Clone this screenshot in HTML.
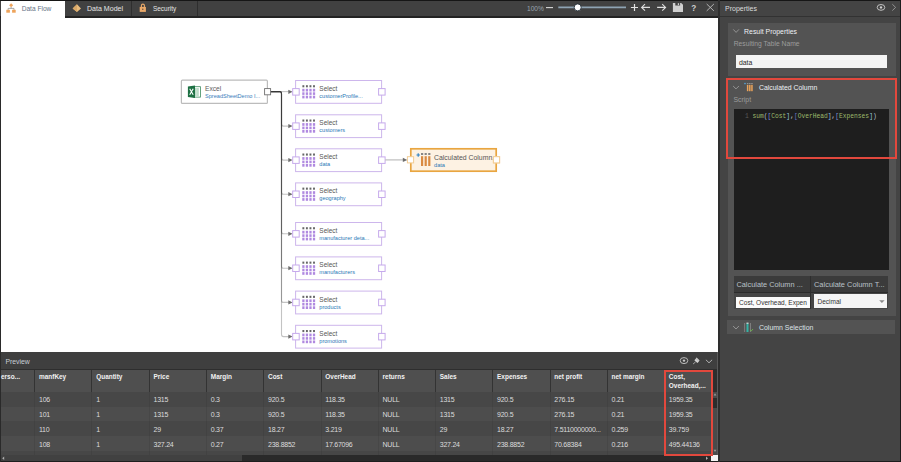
<!DOCTYPE html><html><head><meta charset="utf-8"><style>
*{margin:0;padding:0;box-sizing:border-box}
html,body{width:901px;height:462px;overflow:hidden;background:#2e2e2e;font-family:"Liberation Sans",sans-serif}
.a{position:absolute}
.t{position:absolute;white-space:nowrap;line-height:10px}
.m{font-family:"Liberation Mono",monospace}
svg{position:absolute;left:0;top:0}
</style></head><body>
<div class="a" style="left:0px;top:0px;width:718px;height:18px;background:#414141;border-top:1px solid #161616;border-bottom:2px solid #232323"></div>
<div class="a" style="left:1px;top:1px;width:64px;height:18px;background:#fff"></div>
<div class="a" style="left:131px;top:1px;width:1px;height:15px;background:#2e2e2e"></div>
<div class="a" style="left:197px;top:1px;width:1px;height:15px;background:#2e2e2e"></div>
<div class="t" style="left:21.7px;top:4px;font-size:6.6px;color:#667385">Data Flow</div>
<div class="t" style="left:87px;top:4px;font-size:7.05px;color:#e6e6e6">Data Model</div>
<div class="t" style="left:153px;top:4px;font-size:6.45px;color:#e6e6e6">Security</div>
<div class="t" style="left:527px;top:4px;font-size:6.6px;color:#9aa5ae">100%</div>
<div class="a" style="left:0px;top:18px;width:718px;height:334px;background:#fff;border-left:1px solid #2a2a2a"></div>
<div class="a" style="left:718px;top:0px;width:2px;height:462px;background:#2e2e2e"></div>
<div class="a" style="left:720px;top:0px;width:181px;height:462px;background:#444;border-top:1px solid #161616"></div>
<div class="a" style="left:720px;top:16px;width:181px;height:1px;background:#323232"></div>
<div class="a" style="left:900px;top:0px;width:1px;height:462px;background:#1e1e1e"></div>
<div class="a" style="left:720px;top:461px;width:181px;height:1px;background:#1c1c1c"></div>
<div class="t" style="left:725px;top:4px;font-size:7px;color:#dcdcdc">Properties</div>
<div class="a" style="left:727.5px;top:23.4px;width:168px;height:52.6px;background:#535353"></div>
<div class="t" style="left:744.1px;top:27px;font-size:6.9px;color:#eef1f4">Result Properties</div>
<div class="t" style="left:733.7px;top:39px;font-size:6.75px;color:#9c9c9c">Resulting Table Name</div>
<div class="a" style="left:736px;top:54.6px;width:151px;height:13.6px;background:#f4f4f4"></div>
<div class="t" style="left:738.9px;top:58px;font-size:6.9px;color:#2a2a2a">data</div>
<div class="a" style="left:727.5px;top:79px;width:168px;height:237.4px;background:#535353"></div>
<div class="t" style="left:759px;top:83px;font-size:6.9px;color:#eef1f4">Calculated Column</div>
<div class="t" style="left:733.5px;top:95px;font-size:6.9px;color:#9c9c9c">Script</div>
<div class="a" style="left:733.8px;top:109px;width:155.4px;height:160.5px;background:#1e1e1e"></div>
<div class="t m" style="left:745.1px;top:112px;font-size:6.28px;color:#5a5a5a">1</div>
<div class="t m" style="left:752.5px;top:112px;font-size:6.28px;"><span style="color:#9dbb6c">sum</span><span style="color:#b8c4d0">(</span><span style="color:#7b8fd8">[</span><span style="color:#9dbb6c">Cost</span><span style="color:#9cc8e0">]</span><span style="color:#d0d0d0">,</span><span style="color:#6a6fd0">[</span><span style="color:#9dbb6c">OverHead</span><span style="color:#9cc8e0">]</span><span style="color:#d0d0d0">,</span><span style="color:#7b8fd8">[</span><span style="color:#9dbb6c">Expenses</span><span style="color:#9cc8e0">]</span><span style="color:#b8c4d0">)</span></div>
<div class="a" style="left:733.8px;top:276.2px;width:154.7px;height:33px;background:#464646"></div>
<div class="a" style="left:733.8px;top:276.2px;width:154.7px;height:17px;background:#3b3b3b;border-bottom:1px solid #2c2c2c"></div>
<div class="a" style="left:810.2px;top:276.2px;width:0.9px;height:33px;background:#2e2e2e"></div>
<div class="t" style="left:736.4px;top:280px;font-size:7.38px;color:#b9c1c8">Calculate Column ...</div>
<div class="t" style="left:814px;top:280px;font-size:7.45px;color:#b9c1c8">Calculate Column T...</div>
<div class="a" style="left:736px;top:296.9px;width:74.2px;height:10.8px;background:#fbfbfb"></div>
<div class="t" style="left:739.1px;top:298px;font-size:6.53px;color:#333">Cost, Overhead, Expen</div>
<div class="a" style="left:814px;top:294px;width:73px;height:14px;background:#f5f5f5"></div>
<div class="t" style="left:817.5px;top:297px;font-size:6.5px;color:#333">Decimal</div>
<div class="a" style="left:727.3px;top:319.8px;width:168.2px;height:14.4px;background:#535353"></div>
<div class="t" style="left:759px;top:323px;font-size:6.94px;color:#dde2e6">Column Selection</div>
<div class="a" style="left:725.8px;top:77.8px;width:171.5px;height:80.8px;border:2px solid #e2483d"></div>
<div class="a" style="left:0px;top:352px;width:717px;height:17px;background:#3f3f3f;border-left:1px solid #2a2a2a"></div>
<div class="a" style="left:1px;top:369px;width:716px;height:1.2px;background:#2e2e2e"></div>
<div class="a" style="left:717px;top:352px;width:1px;height:110px;background:#5a5a5a"></div>
<div class="t" style="left:5.4px;top:357px;font-size:6.83px;color:#c8ced6">Preview</div>
<div class="a" style="left:1px;top:370px;width:712px;height:22px;background:#4f4f4f"></div>
<div class="a" style="left:1px;top:392px;width:712px;height:63px;background:#474747"></div>
<div class="a" style="left:1px;top:406.5px;width:712px;height:14.5px;background:#4d4d4d"></div>
<div class="a" style="left:1px;top:436px;width:712px;height:14.7px;background:#4d4d4d"></div>
<div class="a" style="left:1px;top:455px;width:716px;height:6px;background:#2a2a2a"></div>
<div class="a" style="left:1px;top:455px;width:241px;height:6px;background:#414141"></div>
<div class="a" style="left:0px;top:461px;width:718px;height:1px;background:#1e1e1e"></div>
<div class="a" style="left:713.3px;top:392px;width:3.4px;height:63px;background:#4a4a4a"></div>
<div class="a" style="left:713.3px;top:397.5px;width:3.4px;height:10px;background:#2c2c2c"></div>
<div class="a" style="left:711px;top:455px;width:7px;height:6px;background:#f4f4f4"></div>
<div class="a" style="left:0px;top:352px;width:1px;height:110px;background:#2a2a2a"></div>
<div class="a" style="left:34.2px;top:370px;width:1px;height:22px;background:#333"></div>
<div class="a" style="left:34.2px;top:392px;width:1px;height:63px;background:rgba(0,0,0,0.07)"></div>
<div class="a" style="left:91.46px;top:370px;width:1px;height:22px;background:#333"></div>
<div class="a" style="left:91.46px;top:392px;width:1px;height:63px;background:rgba(0,0,0,0.07)"></div>
<div class="a" style="left:148.72px;top:370px;width:1px;height:22px;background:#333"></div>
<div class="a" style="left:148.72px;top:392px;width:1px;height:63px;background:rgba(0,0,0,0.07)"></div>
<div class="a" style="left:205.98px;top:370px;width:1px;height:22px;background:#333"></div>
<div class="a" style="left:205.98px;top:392px;width:1px;height:63px;background:rgba(0,0,0,0.07)"></div>
<div class="a" style="left:263.24px;top:370px;width:1px;height:22px;background:#333"></div>
<div class="a" style="left:263.24px;top:392px;width:1px;height:63px;background:rgba(0,0,0,0.07)"></div>
<div class="a" style="left:320.5px;top:370px;width:1px;height:22px;background:#333"></div>
<div class="a" style="left:320.5px;top:392px;width:1px;height:63px;background:rgba(0,0,0,0.07)"></div>
<div class="a" style="left:377.76px;top:370px;width:1px;height:22px;background:#333"></div>
<div class="a" style="left:377.76px;top:392px;width:1px;height:63px;background:rgba(0,0,0,0.07)"></div>
<div class="a" style="left:435.02px;top:370px;width:1px;height:22px;background:#333"></div>
<div class="a" style="left:435.02px;top:392px;width:1px;height:63px;background:rgba(0,0,0,0.07)"></div>
<div class="a" style="left:492.28px;top:370px;width:1px;height:22px;background:#333"></div>
<div class="a" style="left:492.28px;top:392px;width:1px;height:63px;background:rgba(0,0,0,0.07)"></div>
<div class="a" style="left:549.54px;top:370px;width:1px;height:22px;background:#333"></div>
<div class="a" style="left:549.54px;top:392px;width:1px;height:63px;background:rgba(0,0,0,0.07)"></div>
<div class="a" style="left:606.8px;top:370px;width:1px;height:22px;background:#333"></div>
<div class="a" style="left:606.8px;top:392px;width:1px;height:63px;background:rgba(0,0,0,0.07)"></div>
<div class="a" style="left:664.06px;top:370px;width:1px;height:22px;background:#333"></div>
<div class="a" style="left:664.06px;top:392px;width:1px;height:63px;background:rgba(0,0,0,0.07)"></div>
<div class="t" style="left:1px;top:372px;font-size:6.45px;color:#f2f2f2;font-weight:bold">erso...</div>
<div class="t" style="left:39.0px;top:372px;font-size:6.45px;color:#f2f2f2;font-weight:bold">manfKey</div>
<div class="t" style="left:96.26px;top:372px;font-size:6.45px;color:#f2f2f2;font-weight:bold">Quantity</div>
<div class="t" style="left:153.52px;top:372px;font-size:6.45px;color:#f2f2f2;font-weight:bold">Price</div>
<div class="t" style="left:210.78px;top:372px;font-size:6.45px;color:#f2f2f2;font-weight:bold">Margin</div>
<div class="t" style="left:268.04px;top:372px;font-size:6.45px;color:#f2f2f2;font-weight:bold">Cost</div>
<div class="t" style="left:325.3px;top:372px;font-size:6.45px;color:#f2f2f2;font-weight:bold">OverHead</div>
<div class="t" style="left:382.56px;top:372px;font-size:6.45px;color:#f2f2f2;font-weight:bold">returns</div>
<div class="t" style="left:439.82px;top:372px;font-size:6.45px;color:#f2f2f2;font-weight:bold">Sales</div>
<div class="t" style="left:497.08px;top:372px;font-size:6.45px;color:#f2f2f2;font-weight:bold">Expenses</div>
<div class="t" style="left:554.34px;top:372px;font-size:6.45px;color:#f2f2f2;font-weight:bold">net profit</div>
<div class="t" style="left:611.6px;top:372px;font-size:6.45px;color:#f2f2f2;font-weight:bold">net margin</div>
<div class="t" style="left:668.86px;top:372px;font-size:6.45px;color:#f2f2f2;font-weight:bold">Cost,</div>
<div class="t" style="left:668.86px;top:381px;font-size:6.45px;color:#f2f2f2;font-weight:bold">Overhead,...</div>
<div class="t" style="left:39.0px;top:395px;font-size:7px;color:#dcdcdc;letter-spacing:-0.25px">106</div>
<div class="t" style="left:96.26px;top:395px;font-size:7px;color:#dcdcdc;letter-spacing:-0.25px">1</div>
<div class="t" style="left:153.52px;top:395px;font-size:7px;color:#dcdcdc;letter-spacing:-0.25px">1315</div>
<div class="t" style="left:210.78px;top:395px;font-size:7px;color:#dcdcdc;letter-spacing:-0.25px">0.3</div>
<div class="t" style="left:268.04px;top:395px;font-size:7px;color:#dcdcdc;letter-spacing:-0.25px">920.5</div>
<div class="t" style="left:325.3px;top:395px;font-size:7px;color:#dcdcdc;letter-spacing:-0.25px">118.35</div>
<div class="t" style="left:382.56px;top:395px;font-size:7px;color:#dcdcdc;letter-spacing:-0.25px">NULL</div>
<div class="t" style="left:439.82px;top:395px;font-size:7px;color:#dcdcdc;letter-spacing:-0.25px">1315</div>
<div class="t" style="left:497.08px;top:395px;font-size:7px;color:#dcdcdc;letter-spacing:-0.25px">920.5</div>
<div class="t" style="left:554.34px;top:395px;font-size:7px;color:#dcdcdc;letter-spacing:-0.25px">276.15</div>
<div class="t" style="left:611.6px;top:395px;font-size:7px;color:#dcdcdc;letter-spacing:-0.25px">0.21</div>
<div class="t" style="left:668.86px;top:395px;font-size:7px;color:#dcdcdc;letter-spacing:-0.25px">1959.35</div>
<div class="t" style="left:39.0px;top:410px;font-size:7px;color:#dcdcdc;letter-spacing:-0.25px">101</div>
<div class="t" style="left:96.26px;top:410px;font-size:7px;color:#dcdcdc;letter-spacing:-0.25px">1</div>
<div class="t" style="left:153.52px;top:410px;font-size:7px;color:#dcdcdc;letter-spacing:-0.25px">1315</div>
<div class="t" style="left:210.78px;top:410px;font-size:7px;color:#dcdcdc;letter-spacing:-0.25px">0.3</div>
<div class="t" style="left:268.04px;top:410px;font-size:7px;color:#dcdcdc;letter-spacing:-0.25px">920.5</div>
<div class="t" style="left:325.3px;top:410px;font-size:7px;color:#dcdcdc;letter-spacing:-0.25px">118.35</div>
<div class="t" style="left:382.56px;top:410px;font-size:7px;color:#dcdcdc;letter-spacing:-0.25px">NULL</div>
<div class="t" style="left:439.82px;top:410px;font-size:7px;color:#dcdcdc;letter-spacing:-0.25px">1315</div>
<div class="t" style="left:497.08px;top:410px;font-size:7px;color:#dcdcdc;letter-spacing:-0.25px">920.5</div>
<div class="t" style="left:554.34px;top:410px;font-size:7px;color:#dcdcdc;letter-spacing:-0.25px">276.15</div>
<div class="t" style="left:611.6px;top:410px;font-size:7px;color:#dcdcdc;letter-spacing:-0.25px">0.21</div>
<div class="t" style="left:668.86px;top:410px;font-size:7px;color:#dcdcdc;letter-spacing:-0.25px">1959.35</div>
<div class="t" style="left:39.0px;top:425px;font-size:7px;color:#dcdcdc;letter-spacing:-0.25px">110</div>
<div class="t" style="left:96.26px;top:425px;font-size:7px;color:#dcdcdc;letter-spacing:-0.25px">1</div>
<div class="t" style="left:153.52px;top:425px;font-size:7px;color:#dcdcdc;letter-spacing:-0.25px">29</div>
<div class="t" style="left:210.78px;top:425px;font-size:7px;color:#dcdcdc;letter-spacing:-0.25px">0.37</div>
<div class="t" style="left:268.04px;top:425px;font-size:7px;color:#dcdcdc;letter-spacing:-0.25px">18.27</div>
<div class="t" style="left:325.3px;top:425px;font-size:7px;color:#dcdcdc;letter-spacing:-0.25px">3.219</div>
<div class="t" style="left:382.56px;top:425px;font-size:7px;color:#dcdcdc;letter-spacing:-0.25px">NULL</div>
<div class="t" style="left:439.82px;top:425px;font-size:7px;color:#dcdcdc;letter-spacing:-0.25px">29</div>
<div class="t" style="left:497.08px;top:425px;font-size:7px;color:#dcdcdc;letter-spacing:-0.25px">18.27</div>
<div class="t" style="left:554.34px;top:425px;font-size:7px;color:#dcdcdc;letter-spacing:-0.25px">7.5110000000...</div>
<div class="t" style="left:611.6px;top:425px;font-size:7px;color:#dcdcdc;letter-spacing:-0.25px">0.259</div>
<div class="t" style="left:668.86px;top:425px;font-size:7px;color:#dcdcdc;letter-spacing:-0.25px">39.759</div>
<div class="t" style="left:39.0px;top:440px;font-size:7px;color:#dcdcdc;letter-spacing:-0.25px">108</div>
<div class="t" style="left:96.26px;top:440px;font-size:7px;color:#dcdcdc;letter-spacing:-0.25px">1</div>
<div class="t" style="left:153.52px;top:440px;font-size:7px;color:#dcdcdc;letter-spacing:-0.25px">327.24</div>
<div class="t" style="left:210.78px;top:440px;font-size:7px;color:#dcdcdc;letter-spacing:-0.25px">0.27</div>
<div class="t" style="left:268.04px;top:440px;font-size:7px;color:#dcdcdc;letter-spacing:-0.25px">238.8852</div>
<div class="t" style="left:325.3px;top:440px;font-size:7px;color:#dcdcdc;letter-spacing:-0.25px">17.67096</div>
<div class="t" style="left:382.56px;top:440px;font-size:7px;color:#dcdcdc;letter-spacing:-0.25px">NULL</div>
<div class="t" style="left:439.82px;top:440px;font-size:7px;color:#dcdcdc;letter-spacing:-0.25px">327.24</div>
<div class="t" style="left:497.08px;top:440px;font-size:7px;color:#dcdcdc;letter-spacing:-0.25px">238.8852</div>
<div class="t" style="left:554.34px;top:440px;font-size:7px;color:#dcdcdc;letter-spacing:-0.25px">70.68384</div>
<div class="t" style="left:611.6px;top:440px;font-size:7px;color:#dcdcdc;letter-spacing:-0.25px">0.216</div>
<div class="t" style="left:668.86px;top:440px;font-size:7px;color:#dcdcdc;letter-spacing:-0.25px">495.44136</div>
<div class="a" style="left:664.2px;top:370px;width:48.8px;height:86px;border:2px solid #e2483d"></div>
<svg width="901" height="462" viewBox="0 0 901 462"><path d="M11.1,3.2 L13.1,5.2 L11.1,7.2 L9.1,5.2 Z" fill="#eea45c"/><path d="M11.1,7 V8.4 M8.1,10 V8.4 H14 V10" fill="none" stroke="#8a8a8a" stroke-width="0.7"/><rect x="6.3" y="9.8" width="3.6" height="2.9" fill="#eea45c"/><rect x="12.1" y="9.8" width="3.6" height="2.9" fill="#eea45c"/><path d="M77,4.3 L81,8.4 L77,11.9 L72.6,8.5 Z" fill="#e9bb7c"/><path d="M77,4.3 L77,11.9 L72.6,8.5 Z" fill="#d9a868"/><path d="M141.4,7 V5.6 A1.5,1.5 0 0 1 144.4,5.6 V7" fill="none" stroke="#e8a868" stroke-width="1.1"/><rect x="139.7" y="6.9" width="6.2" height="5" fill="#eaa96a"/><circle cx="142.8" cy="9.3" r="0.7" fill="#5a4a3a"/><path d="M546,7.6 H553" stroke="#d8d8d8" stroke-width="1.1"/><path d="M558.3,7.4 H626" stroke="#8ea3b3" stroke-width="1.9"/><circle cx="577.7" cy="7.4" r="3.5" fill="#fff" stroke="#26313a" stroke-width="0.9"/><path d="M630.9,7.5 H638 M634.5,4.1 V11" stroke="#e2e2e2" stroke-width="1.2"/><path d="M650,7.4 H641.6 M645,4.1 L641.6,7.4 L645,10.7" fill="none" stroke="#dedede" stroke-width="1.1"/><path d="M657.1,7.4 H665.6 M662.2,4.1 L665.6,7.4 L662.2,10.7" fill="none" stroke="#dedede" stroke-width="1.1"/><path d="M672.9,2.9 H681.2 L683,4.7 V11.9 H672.9 Z" fill="#cfcfcf"/><rect x="675.3" y="2.9" width="4.8" height="2.6" fill="#404040"/><rect x="677.8" y="3.2" width="1.3" height="1.9" fill="#cfcfcf"/><path d="M706.7,4 L713.9,10.9 M713.9,4 L706.7,10.9" stroke="#bdbdbd" stroke-width="0.9"/><path d="M270.5,91.6 H289" fill="none" stroke="rgba(40,40,40,0.28)" stroke-width="1.1"/><path d="M288.3,89.7 L292.6,91.8 L288.3,93.9 Z" fill="#6e6e6e"/><path d="M270.5,91.6 H279.5 Q281.5,91.6 281.5,93.6 V124.1 Q281.5,126.1 283.5,126.1 H289" fill="none" stroke="rgba(40,40,40,0.28)" stroke-width="1.1"/><path d="M288.3,124.0 L292.6,126.1 L288.3,128.2 Z" fill="#6e6e6e"/><path d="M270.5,91.6 H279.5 Q281.5,91.6 281.5,93.6 V158.1 Q281.5,160.1 283.5,160.1 H289" fill="none" stroke="rgba(40,40,40,0.28)" stroke-width="1.1"/><path d="M288.3,158.0 L292.6,160.1 L288.3,162.2 Z" fill="#6e6e6e"/><path d="M270.5,91.6 H279.5 Q281.5,91.6 281.5,93.6 V192.2 Q281.5,194.2 283.5,194.2 H289" fill="none" stroke="rgba(40,40,40,0.28)" stroke-width="1.1"/><path d="M288.3,192.1 L292.6,194.2 L288.3,196.3 Z" fill="#6e6e6e"/><path d="M270.5,91.6 H279.5 Q281.5,91.6 281.5,93.6 V231.8 Q281.5,233.8 283.5,233.8 H289" fill="none" stroke="rgba(40,40,40,0.28)" stroke-width="1.1"/><path d="M288.3,231.7 L292.6,233.8 L288.3,235.9 Z" fill="#6e6e6e"/><path d="M270.5,91.6 H279.5 Q281.5,91.6 281.5,93.6 V266.2 Q281.5,268.2 283.5,268.2 H289" fill="none" stroke="rgba(40,40,40,0.28)" stroke-width="1.1"/><path d="M288.3,266.1 L292.6,268.2 L288.3,270.3 Z" fill="#6e6e6e"/><path d="M270.5,91.6 H279.5 Q281.5,91.6 281.5,93.6 V300.4 Q281.5,302.4 283.5,302.4 H289" fill="none" stroke="rgba(40,40,40,0.28)" stroke-width="1.1"/><path d="M288.3,300.3 L292.6,302.4 L288.3,304.5 Z" fill="#6e6e6e"/><path d="M270.5,91.6 H279.5 Q281.5,91.6 281.5,93.6 V334.6 Q281.5,336.6 283.5,336.6 H289" fill="none" stroke="rgba(40,40,40,0.28)" stroke-width="1.1"/><path d="M288.3,334.5 L292.6,336.6 L288.3,338.7 Z" fill="#6e6e6e"/><rect x="181.4" y="80.2" width="86" height="23.2" rx="1" fill="#fff" stroke="#bcbcbc" stroke-width="1.2"/><rect x="264.6" y="88.6" width="6" height="6.2" fill="#fff" stroke="#707070" stroke-width="0.9"/><rect x="193.6" y="86.7" width="6.8" height="10.4" fill="#fff" stroke="#3d8b5e" stroke-width="0.8"/><rect x="195.4" y="88" width="1.1" height="8" fill="#92c5a5"/><rect x="197.4" y="88" width="1.1" height="8" fill="#92c5a5"/><path d="M187.9,86.4 L195,85.6 L195,97.9 L187.9,97.1 Z" fill="#1d7043"/><path d="M189.7,88.8 L193.2,94.8 M193.2,88.8 L189.7,94.8" stroke="#fff" stroke-width="1.1"/><rect x="295.6" y="80.5" width="86" height="22.799999999999997" fill="#fff" stroke="#cdb6ec" stroke-width="1"/><rect x="292.7" y="88.6" width="6.5" height="6.5" fill="#fff" stroke="#c6aaec" stroke-width="1"/><rect x="378.6" y="88.6" width="6.5" height="6.5" fill="#fff" stroke="#c6aaec" stroke-width="1"/><rect x="302.4" y="85.2" width="1.9" height="2.1" fill="#666"/><rect x="302.25" y="88.8" width="2.25" height="2.7" fill="#b089e0"/><rect x="302.25" y="92.3" width="2.25" height="2.6" fill="#b089e0"/><rect x="302.25" y="95.7" width="2.25" height="2.7" fill="#b089e0"/><rect x="305.95" y="85.2" width="1.9" height="2.1" fill="#666"/><rect x="305.8" y="88.8" width="2.25" height="2.7" fill="#b089e0"/><rect x="305.8" y="92.3" width="2.25" height="2.6" fill="#b089e0"/><rect x="305.8" y="95.7" width="2.25" height="2.7" fill="#b089e0"/><rect x="309.5" y="85.2" width="1.9" height="2.1" fill="#666"/><rect x="309.35" y="88.8" width="2.25" height="2.7" fill="#b089e0"/><rect x="309.35" y="92.3" width="2.25" height="2.6" fill="#b089e0"/><rect x="309.35" y="95.7" width="2.25" height="2.7" fill="#b089e0"/><rect x="313.05" y="85.2" width="1.9" height="2.1" fill="#666"/><rect x="312.9" y="88.8" width="2.25" height="2.7" fill="#b089e0"/><rect x="312.9" y="92.3" width="2.25" height="2.6" fill="#b089e0"/><rect x="312.9" y="95.7" width="2.25" height="2.7" fill="#b089e0"/><rect x="295.6" y="114.8" width="86" height="22.799999999999997" fill="#fff" stroke="#cdb6ec" stroke-width="1"/><rect x="292.7" y="122.9" width="6.5" height="6.5" fill="#fff" stroke="#c6aaec" stroke-width="1"/><rect x="378.6" y="122.9" width="6.5" height="6.5" fill="#fff" stroke="#c6aaec" stroke-width="1"/><rect x="302.4" y="119.5" width="1.9" height="2.1" fill="#666"/><rect x="302.25" y="123.1" width="2.25" height="2.7" fill="#b089e0"/><rect x="302.25" y="126.6" width="2.25" height="2.6" fill="#b089e0"/><rect x="302.25" y="130.0" width="2.25" height="2.7" fill="#b089e0"/><rect x="305.95" y="119.5" width="1.9" height="2.1" fill="#666"/><rect x="305.8" y="123.1" width="2.25" height="2.7" fill="#b089e0"/><rect x="305.8" y="126.6" width="2.25" height="2.6" fill="#b089e0"/><rect x="305.8" y="130.0" width="2.25" height="2.7" fill="#b089e0"/><rect x="309.5" y="119.5" width="1.9" height="2.1" fill="#666"/><rect x="309.35" y="123.1" width="2.25" height="2.7" fill="#b089e0"/><rect x="309.35" y="126.6" width="2.25" height="2.6" fill="#b089e0"/><rect x="309.35" y="130.0" width="2.25" height="2.7" fill="#b089e0"/><rect x="313.05" y="119.5" width="1.9" height="2.1" fill="#666"/><rect x="312.9" y="123.1" width="2.25" height="2.7" fill="#b089e0"/><rect x="312.9" y="126.6" width="2.25" height="2.6" fill="#b089e0"/><rect x="312.9" y="130.0" width="2.25" height="2.7" fill="#b089e0"/><rect x="295.6" y="148.8" width="86" height="22.799999999999997" fill="#fff" stroke="#cdb6ec" stroke-width="1"/><rect x="292.7" y="156.9" width="6.5" height="6.5" fill="#fff" stroke="#c6aaec" stroke-width="1"/><rect x="378.6" y="156.9" width="6.5" height="6.5" fill="#fff" stroke="#c6aaec" stroke-width="1"/><rect x="302.4" y="153.5" width="1.9" height="2.1" fill="#666"/><rect x="302.25" y="157.1" width="2.25" height="2.7" fill="#b089e0"/><rect x="302.25" y="160.6" width="2.25" height="2.6" fill="#b089e0"/><rect x="302.25" y="164.0" width="2.25" height="2.7" fill="#b089e0"/><rect x="305.95" y="153.5" width="1.9" height="2.1" fill="#666"/><rect x="305.8" y="157.1" width="2.25" height="2.7" fill="#b089e0"/><rect x="305.8" y="160.6" width="2.25" height="2.6" fill="#b089e0"/><rect x="305.8" y="164.0" width="2.25" height="2.7" fill="#b089e0"/><rect x="309.5" y="153.5" width="1.9" height="2.1" fill="#666"/><rect x="309.35" y="157.1" width="2.25" height="2.7" fill="#b089e0"/><rect x="309.35" y="160.6" width="2.25" height="2.6" fill="#b089e0"/><rect x="309.35" y="164.0" width="2.25" height="2.7" fill="#b089e0"/><rect x="313.05" y="153.5" width="1.9" height="2.1" fill="#666"/><rect x="312.9" y="157.1" width="2.25" height="2.7" fill="#b089e0"/><rect x="312.9" y="160.6" width="2.25" height="2.6" fill="#b089e0"/><rect x="312.9" y="164.0" width="2.25" height="2.7" fill="#b089e0"/><rect x="295.6" y="182.9" width="86" height="22.799999999999997" fill="#fff" stroke="#cdb6ec" stroke-width="1"/><rect x="292.7" y="191.0" width="6.5" height="6.5" fill="#fff" stroke="#c6aaec" stroke-width="1"/><rect x="378.6" y="191.0" width="6.5" height="6.5" fill="#fff" stroke="#c6aaec" stroke-width="1"/><rect x="302.4" y="187.6" width="1.9" height="2.1" fill="#666"/><rect x="302.25" y="191.2" width="2.25" height="2.7" fill="#b089e0"/><rect x="302.25" y="194.7" width="2.25" height="2.6" fill="#b089e0"/><rect x="302.25" y="198.1" width="2.25" height="2.7" fill="#b089e0"/><rect x="305.95" y="187.6" width="1.9" height="2.1" fill="#666"/><rect x="305.8" y="191.2" width="2.25" height="2.7" fill="#b089e0"/><rect x="305.8" y="194.7" width="2.25" height="2.6" fill="#b089e0"/><rect x="305.8" y="198.1" width="2.25" height="2.7" fill="#b089e0"/><rect x="309.5" y="187.6" width="1.9" height="2.1" fill="#666"/><rect x="309.35" y="191.2" width="2.25" height="2.7" fill="#b089e0"/><rect x="309.35" y="194.7" width="2.25" height="2.6" fill="#b089e0"/><rect x="309.35" y="198.1" width="2.25" height="2.7" fill="#b089e0"/><rect x="313.05" y="187.6" width="1.9" height="2.1" fill="#666"/><rect x="312.9" y="191.2" width="2.25" height="2.7" fill="#b089e0"/><rect x="312.9" y="194.7" width="2.25" height="2.6" fill="#b089e0"/><rect x="312.9" y="198.1" width="2.25" height="2.7" fill="#b089e0"/><rect x="295.6" y="222.5" width="86" height="22.799999999999997" fill="#fff" stroke="#cdb6ec" stroke-width="1"/><rect x="292.7" y="230.6" width="6.5" height="6.5" fill="#fff" stroke="#c6aaec" stroke-width="1"/><rect x="378.6" y="230.6" width="6.5" height="6.5" fill="#fff" stroke="#c6aaec" stroke-width="1"/><rect x="302.4" y="227.2" width="1.9" height="2.1" fill="#666"/><rect x="302.25" y="230.8" width="2.25" height="2.7" fill="#b089e0"/><rect x="302.25" y="234.3" width="2.25" height="2.6" fill="#b089e0"/><rect x="302.25" y="237.7" width="2.25" height="2.7" fill="#b089e0"/><rect x="305.95" y="227.2" width="1.9" height="2.1" fill="#666"/><rect x="305.8" y="230.8" width="2.25" height="2.7" fill="#b089e0"/><rect x="305.8" y="234.3" width="2.25" height="2.6" fill="#b089e0"/><rect x="305.8" y="237.7" width="2.25" height="2.7" fill="#b089e0"/><rect x="309.5" y="227.2" width="1.9" height="2.1" fill="#666"/><rect x="309.35" y="230.8" width="2.25" height="2.7" fill="#b089e0"/><rect x="309.35" y="234.3" width="2.25" height="2.6" fill="#b089e0"/><rect x="309.35" y="237.7" width="2.25" height="2.7" fill="#b089e0"/><rect x="313.05" y="227.2" width="1.9" height="2.1" fill="#666"/><rect x="312.9" y="230.8" width="2.25" height="2.7" fill="#b089e0"/><rect x="312.9" y="234.3" width="2.25" height="2.6" fill="#b089e0"/><rect x="312.9" y="237.7" width="2.25" height="2.7" fill="#b089e0"/><rect x="295.6" y="256.9" width="86" height="22.799999999999997" fill="#fff" stroke="#cdb6ec" stroke-width="1"/><rect x="292.7" y="265.0" width="6.5" height="6.5" fill="#fff" stroke="#c6aaec" stroke-width="1"/><rect x="378.6" y="265.0" width="6.5" height="6.5" fill="#fff" stroke="#c6aaec" stroke-width="1"/><rect x="302.4" y="261.6" width="1.9" height="2.1" fill="#666"/><rect x="302.25" y="265.2" width="2.25" height="2.7" fill="#b089e0"/><rect x="302.25" y="268.7" width="2.25" height="2.6" fill="#b089e0"/><rect x="302.25" y="272.1" width="2.25" height="2.7" fill="#b089e0"/><rect x="305.95" y="261.6" width="1.9" height="2.1" fill="#666"/><rect x="305.8" y="265.2" width="2.25" height="2.7" fill="#b089e0"/><rect x="305.8" y="268.7" width="2.25" height="2.6" fill="#b089e0"/><rect x="305.8" y="272.1" width="2.25" height="2.7" fill="#b089e0"/><rect x="309.5" y="261.6" width="1.9" height="2.1" fill="#666"/><rect x="309.35" y="265.2" width="2.25" height="2.7" fill="#b089e0"/><rect x="309.35" y="268.7" width="2.25" height="2.6" fill="#b089e0"/><rect x="309.35" y="272.1" width="2.25" height="2.7" fill="#b089e0"/><rect x="313.05" y="261.6" width="1.9" height="2.1" fill="#666"/><rect x="312.9" y="265.2" width="2.25" height="2.7" fill="#b089e0"/><rect x="312.9" y="268.7" width="2.25" height="2.6" fill="#b089e0"/><rect x="312.9" y="272.1" width="2.25" height="2.7" fill="#b089e0"/><rect x="295.6" y="291.1" width="86" height="22.799999999999997" fill="#fff" stroke="#cdb6ec" stroke-width="1"/><rect x="292.7" y="299.2" width="6.5" height="6.5" fill="#fff" stroke="#c6aaec" stroke-width="1"/><rect x="378.6" y="299.2" width="6.5" height="6.5" fill="#fff" stroke="#c6aaec" stroke-width="1"/><rect x="302.4" y="295.8" width="1.9" height="2.1" fill="#666"/><rect x="302.25" y="299.4" width="2.25" height="2.7" fill="#b089e0"/><rect x="302.25" y="302.9" width="2.25" height="2.6" fill="#b089e0"/><rect x="302.25" y="306.3" width="2.25" height="2.7" fill="#b089e0"/><rect x="305.95" y="295.8" width="1.9" height="2.1" fill="#666"/><rect x="305.8" y="299.4" width="2.25" height="2.7" fill="#b089e0"/><rect x="305.8" y="302.9" width="2.25" height="2.6" fill="#b089e0"/><rect x="305.8" y="306.3" width="2.25" height="2.7" fill="#b089e0"/><rect x="309.5" y="295.8" width="1.9" height="2.1" fill="#666"/><rect x="309.35" y="299.4" width="2.25" height="2.7" fill="#b089e0"/><rect x="309.35" y="302.9" width="2.25" height="2.6" fill="#b089e0"/><rect x="309.35" y="306.3" width="2.25" height="2.7" fill="#b089e0"/><rect x="313.05" y="295.8" width="1.9" height="2.1" fill="#666"/><rect x="312.9" y="299.4" width="2.25" height="2.7" fill="#b089e0"/><rect x="312.9" y="302.9" width="2.25" height="2.6" fill="#b089e0"/><rect x="312.9" y="306.3" width="2.25" height="2.7" fill="#b089e0"/><rect x="295.6" y="325.3" width="86" height="22.799999999999997" fill="#fff" stroke="#cdb6ec" stroke-width="1"/><rect x="292.7" y="333.4" width="6.5" height="6.5" fill="#fff" stroke="#c6aaec" stroke-width="1"/><rect x="378.6" y="333.4" width="6.5" height="6.5" fill="#fff" stroke="#c6aaec" stroke-width="1"/><rect x="302.4" y="330.0" width="1.9" height="2.1" fill="#666"/><rect x="302.25" y="333.6" width="2.25" height="2.7" fill="#b089e0"/><rect x="302.25" y="337.1" width="2.25" height="2.6" fill="#b089e0"/><rect x="302.25" y="340.5" width="2.25" height="2.7" fill="#b089e0"/><rect x="305.95" y="330.0" width="1.9" height="2.1" fill="#666"/><rect x="305.8" y="333.6" width="2.25" height="2.7" fill="#b089e0"/><rect x="305.8" y="337.1" width="2.25" height="2.6" fill="#b089e0"/><rect x="305.8" y="340.5" width="2.25" height="2.7" fill="#b089e0"/><rect x="309.5" y="330.0" width="1.9" height="2.1" fill="#666"/><rect x="309.35" y="333.6" width="2.25" height="2.7" fill="#b089e0"/><rect x="309.35" y="337.1" width="2.25" height="2.6" fill="#b089e0"/><rect x="309.35" y="340.5" width="2.25" height="2.7" fill="#b089e0"/><rect x="313.05" y="330.0" width="1.9" height="2.1" fill="#666"/><rect x="312.9" y="333.6" width="2.25" height="2.7" fill="#b089e0"/><rect x="312.9" y="337.1" width="2.25" height="2.6" fill="#b089e0"/><rect x="312.9" y="340.5" width="2.25" height="2.7" fill="#b089e0"/><path d="M385.2,159.9 H403" stroke="#bdbdbd" stroke-width="1.2"/><path d="M402.8,157.8 L407.3,159.9 L402.8,162 Z" fill="#6e6e6e"/><rect x="410.8" y="148.8" width="85.4" height="22.4" fill="#fdf2e3" stroke="#e9a540" stroke-width="1.7"/><rect x="407.4" y="156.7" width="6.2" height="6.2" fill="#fff" stroke="#f2cc94" stroke-width="1"/><rect x="493.4" y="156.7" width="6.2" height="6.2" fill="#fff" stroke="#f2cc94" stroke-width="1"/><rect x="421.0" y="153.1" width="2.2" height="1.8" fill="#7a7a7a"/><rect x="421.0" y="156.2" width="2.2" height="9.8" fill="#d98a42"/><rect x="424.6" y="153.1" width="2.2" height="1.8" fill="#7a7a7a"/><rect x="424.6" y="156.2" width="2.2" height="9.8" fill="#d98a42"/><rect x="428.2" y="153.1" width="2.2" height="1.8" fill="#7a7a7a"/><rect x="428.2" y="156.2" width="2.2" height="9.8" fill="#d98a42"/><path d="M418.2,153.3 V156.7 M416.5,155 H419.9" stroke="#2b80c4" stroke-width="1.1"/><ellipse cx="881" cy="7.4" rx="3.8" ry="2.9" fill="none" stroke="#cfcfcf" stroke-width="0.9"/><circle cx="881" cy="7.4" r="1.2" fill="#cfcfcf"/><path d="M892.3,4.2 L895.6,7.4 L892.3,10.6" fill="none" stroke="#9a9a9a" stroke-width="0.9"/><path d="M733.3,29.4 L736.1,32.4 L738.9,29.4" fill="none" stroke="#9a9a9a" stroke-width="0.9"/><path d="M733.1,86 L736,88.9 L738.9,86" fill="none" stroke="#9a9a9a" stroke-width="0.9"/><path d="M733.1,326 L736,329 L738.9,326" fill="none" stroke="#9a9a9a" stroke-width="0.9"/><circle cx="745" cy="83.6" r="0.8" fill="#55a8e0"/><rect x="746.9" y="83" width="1.5" height="0.9" fill="#9a9a9a"/><rect x="746.9" y="84.8" width="1.5" height="6.4" fill="#eaa35a"/><rect x="749.05" y="83" width="1.5" height="0.9" fill="#9a9a9a"/><rect x="749.05" y="84.8" width="1.5" height="6.4" fill="#eaa35a"/><rect x="751.2" y="83" width="1.5" height="0.9" fill="#9a9a9a"/><rect x="751.2" y="84.8" width="1.5" height="6.4" fill="#eaa35a"/><rect x="744.3" y="323" width="0.8" height="9" fill="#8a8a8a"/><rect x="746.5" y="323.2" width="2" height="8.8" fill="#35b3a6"/><rect x="746.5" y="322.6" width="2" height="1.2" fill="#ddd"/><rect x="750" y="323" width="0.8" height="9" fill="#8a8a8a"/><path d="M750.3,330.2 L751.2,331 L753,329" fill="none" stroke="#6cc24a" stroke-width="0.8"/><path d="M879.2,300.3 H884.6 L881.9,303 Z" fill="#8a8a8a"/><ellipse cx="684" cy="360.6" rx="3.8" ry="3" fill="none" stroke="#c8c8c8" stroke-width="0.9"/><circle cx="684" cy="360.6" r="1.2" fill="#c8c8c8"/><path d="M696.6,357.5 L699.6,360.4 L698.7,361.2 L695.8,358.3 Z" fill="#d4d4d4"/><path d="M696,358.6 L699,361.6 L697.4,363 L694.4,360.3 Z" fill="#d4d4d4"/><path d="M695.6,361.9 L693.1,364" stroke="#c4c4c4" stroke-width="0.8"/><path d="M705.9,359.8 L709,362.8 L712.1,359.8" fill="none" stroke="#bdbdbd" stroke-width="0.9"/><path d="M713.6,395.5 L715,393.2 L716.4,395.5 Z" fill="#9a9a9a"/><path d="M713.6,449.8 L715,452.1 L716.4,449.8 Z" fill="#9a9a9a"/><path d="M4.2,456.5 L2.2,458.2 L4.2,459.9 Z" fill="#b0b0b0"/><path d="M706,456.5 L708,458.2 L706,459.9 Z" fill="#b0b0b0"/></svg>
<div class="t" style="left:205px;top:84px;font-size:6.6px;color:#5d5d5d">Excel</div>
<div class="t" style="left:205px;top:91px;font-size:5.58px;color:#3a7dbb">SpreadSheetDemo I...</div>
<div class="t" style="left:319.3px;top:84px;font-size:6.5px;color:#565656">Select</div>
<div class="t" style="left:319.3px;top:91px;font-size:5.58px;color:#2b78b6">customerProfile...</div>
<div class="t" style="left:319.3px;top:118px;font-size:6.5px;color:#565656">Select</div>
<div class="t" style="left:319.3px;top:125px;font-size:5.58px;color:#2b78b6">customers</div>
<div class="t" style="left:319.3px;top:152px;font-size:6.5px;color:#565656">Select</div>
<div class="t" style="left:319.3px;top:159px;font-size:5.58px;color:#2b78b6">data</div>
<div class="t" style="left:319.3px;top:186px;font-size:6.5px;color:#565656">Select</div>
<div class="t" style="left:319.3px;top:193px;font-size:5.58px;color:#2b78b6">geography</div>
<div class="t" style="left:319.3px;top:226px;font-size:6.5px;color:#565656">Select</div>
<div class="t" style="left:319.3px;top:233px;font-size:5.58px;color:#2b78b6">manufacturer deta...</div>
<div class="t" style="left:319.3px;top:260px;font-size:6.5px;color:#565656">Select</div>
<div class="t" style="left:319.3px;top:267px;font-size:5.58px;color:#2b78b6">manufacturers</div>
<div class="t" style="left:319.3px;top:295px;font-size:6.5px;color:#565656">Select</div>
<div class="t" style="left:319.3px;top:302px;font-size:5.58px;color:#2b78b6">products</div>
<div class="t" style="left:319.3px;top:329px;font-size:6.5px;color:#565656">Select</div>
<div class="t" style="left:319.3px;top:336px;font-size:5.58px;color:#2b78b6">promotions</div>
<div class="t" style="left:434px;top:153px;font-size:6.9px;color:#555">Calculated Column...</div>
<div class="t" style="left:434px;top:160px;font-size:5.65px;color:#2b78b6">data</div>
<div class="t" style="left:691.2px;top:4px;font-size:8.2px;color:#cfcfcf;font-weight:bold">?</div>
<svg width="901" height="462" viewBox="0 0 901 462"><rect x="493.4" y="156.7" width="6.2" height="6.2" fill="#fff" stroke="#f2cc94" stroke-width="1"/></svg>
</body></html>
